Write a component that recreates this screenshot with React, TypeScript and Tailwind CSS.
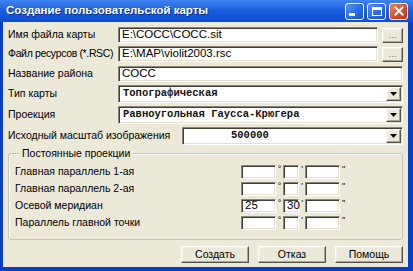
const ui = { fontFamily: '"Liberation Sans", Arial, sans-serif' };
const mono = { fontFamily: '"Liberation Mono", "Courier New", monospace' };

const sunken =
  "bg-white border border-t-[#8a877a] border-l-[#8a877a] border-b-white border-r-white shadow-[inset_1px_1px_0_#3f3d36,inset_-1px_-1px_0_#e4e1d2]";
const raised =
  "bg-[#ece9d8] border border-t-white border-l-white border-b-[#55534a] border-r-[#55534a] shadow-[inset_-1px_-1px_0_#a8a594,inset_1px_1px_0_#f4f2e8]";

function Field({ value, className = "" }: { value?: string; className?: string }) {
  return (
    <div className={`${sunken} flex items-center px-[3px] text-[11.5px] text-black ${className}`} style={ui}>
      {value}
    </div>
  );
}

function Combo({ value, className = "", textClass = "pl-[4px]" }: { value: string; className?: string; textClass?: string }) {
  return (
    <div className={`${sunken} flex items-stretch ${className}`}>
      <div className={`flex-1 flex items-center font-bold text-[10.5px] text-[#111] ${textClass}`} style={mono}>
        {value}
      </div>
      <div className={`${raised} w-[15px] m-[1px] flex items-center justify-center`}>
        <svg width="7" height="4" viewBox="0 0 7 4">
          <path d="M0 0h7L3.5 4z" fill="#000" />
        </svg>
      </div>
    </div>
  );
}

function DotsButton() {
  return (
    <div className={`${raised} w-[21px] h-[15px] flex items-center justify-center text-[9px] text-[#6b6a60] leading-none`} style={ui}>
      ...
    </div>
  );
}

function Label({ children, className = "" }: { children: string; className?: string }) {
  return (
    <div className={`shrink-0 text-[10.5px] text-black whitespace-nowrap ${className}`} style={ui}>
      {children}
    </div>
  );
}

function CoordRow({ label, deg = "", min = "" }: { label: string; deg?: string; min?: string }) {
  return (
    <div className="flex items-center h-[14px]">
      <Label className="w-[226px]">{label}</Label>
      <Field value={deg} className="w-[35px] h-[14px]" />
      <span className="w-[7px] text-center text-[9px] leading-none self-start text-black" style={ui}>°</span>
      <Field value={min} className="w-[16px] h-[14px]" />
      <span className="w-[6px] text-center text-[9px] leading-none self-start text-black" style={ui}>'</span>
      <Field className="w-[35px] h-[14px]" />
      <span className="w-[7px] text-center text-[9px] leading-none self-start text-black" style={ui}>"</span>
    </div>
  );
}

function TitleButton({ kind }: { kind: "min" | "max" | "close" }) {
  const base =
    "w-[19px] h-[17px] rounded-[3px] border border-white flex items-center justify-center shadow-[inset_0_0_2px_rgba(0,0,0,0.3)]";
  if (kind === "close") {
    return (
      <div className={`${base} bg-gradient-to-br from-[#f08a64] via-[#e1502a] to-[#c8381a]`}>
        <svg width="10" height="10" viewBox="0 0 10 10">
          <path d="M1.5 1.5l7 7M8.5 1.5l-7 7" stroke="#fff" strokeWidth="2" strokeLinecap="square" />
        </svg>
      </div>
    );
  }
  return (
    <div className={`${base} bg-gradient-to-br from-[#5d97f7] via-[#2f6fe6] to-[#1c54d2]`}>
      {kind === "min" ? (
        <div className="w-[6px] h-[3px] bg-white self-end mb-[3px] mr-[5px]" />
      ) : (
        <div className="w-[10px] h-[9px] border border-white border-t-[3px]" />
      )}
    </div>
  );
}

export default function App() {
  return (
    <div className="w-[413px] h-[271px] bg-[#0a3fc4] flex flex-col overflow-hidden">
      {/* Title bar */}
      <div className="h-[22px] bg-gradient-to-b from-[#3d83f0] via-[#1a5ddd] to-[#0e4bd2] flex items-center pl-[6px] pr-[5px]">
        <div className="flex-1 text-white font-bold text-[11.5px] [text-shadow:1px_1px_0_#0a2c8a]" style={ui}>
          Создание пользовательской карты
        </div>
        <div className="flex gap-[3px]">
          <TitleButton kind="min" />
          <TitleButton kind="max" />
          <TitleButton kind="close" />
        </div>
      </div>

      {/* Body */}
      <div className="flex-1 ml-[3px] mr-[5px] mb-[4px] bg-[#ece9d8] pt-[5px] pl-[5px] pr-[5px] flex flex-col">
        <div className="flex items-center h-[16px]">
          <Label className="w-[110px]">Имя файла карты</Label>
          <Field value="E:\COCC\COCC.sit" className="w-[260px] h-[16px]" />
          <div className="ml-auto"><DotsButton /></div>
        </div>
        <div className="flex items-center h-[16px] mt-[3px]">
          <Label className="w-[110px] tracking-[-0.35px]">Файл ресурсов (*.RSC)</Label>
          <Field value="E:\MAP\violit2003.rsc" className="w-[260px] h-[16px]" />
          <div className="ml-auto"><DotsButton /></div>
        </div>
        <div className="flex items-center h-[16px] mt-[4px]">
          <Label className="w-[110px]">Название района</Label>
          <Field value="COCC" className="flex-1 h-[16px]" />
        </div>
        <div className="flex items-center h-[18px] mt-[3px]">
          <Label className="w-[110px]">Тип карты</Label>
          <Combo value="Топографическая" className="flex-1 h-[18px]" />
        </div>
        <div className="flex items-center h-[18px] mt-[3px]">
          <Label className="w-[110px]">Проекция</Label>
          <Combo value="Равноугольная Гаусса-Крюгера" className="flex-1 h-[18px]" />
        </div>
        <div className="flex items-center h-[18px] mt-[3px]">
          <Label className="w-[174px]">Исходный масштаб изображения</Label>
          <Combo value="500000" className="flex-1 h-[18px]" textClass="pl-[48px]" />
        </div>

        {/* Group */}
        <div className="relative mt-[8px] h-[87px] border border-[#c9c5b2] rounded-[3px] shadow-[inset_1px_1px_0_#fff] pl-[6px] pt-[11px] flex flex-col gap-[3px]">
          <div className="absolute -top-[7px] left-[10px] px-[3px] bg-[#ece9d8] text-[10.5px] text-black leading-[13px]" style={ui}>
            Постоянные проекции
          </div>
          <CoordRow label="Главная параллель 1-ая" />
          <CoordRow label="Главная параллель 2-ая" />
          <CoordRow label="Осевой меридиан" deg="25" min="30" />
          <CoordRow label="Параллель главной точки" />
        </div>

        {/* Buttons */}
        <div className="flex justify-end gap-[9px] mt-[6px]">
          {["Создать", "Отказ", "Помощь"].map((t) => (
            <div key={t} className={`${raised} w-[68px] h-[17px] flex items-center justify-center text-[10.5px] text-black`} style={ui}>
              {t}
            </div>
          ))}
        </div>
      </div>
    </div>
  );
}
